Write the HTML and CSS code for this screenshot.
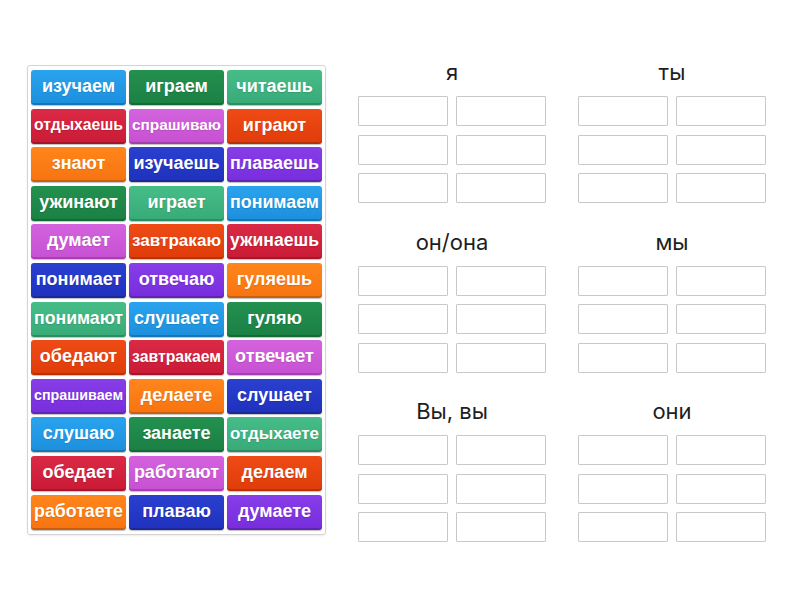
FILE: index.html
```html
<!DOCTYPE html>
<html lang="ru">
<head>
<meta charset="utf-8">
<title>Группировка</title>
<link rel="stylesheet" href="styles.css">
</head>
<body>
<div class="page">
  <div class="bank">
    <div class="tile blue"><span>изучаем</span></div>
    <div class="tile dkgreen"><span>играем</span></div>
    <div class="tile teal"><span>читаешь</span></div>
    <div class="tile red"><span>отдыхаешь</span></div>
    <div class="tile pink"><span>спрашиваю</span></div>
    <div class="tile orred"><span>играют</span></div>
    <div class="tile orange"><span>знают</span></div>
    <div class="tile dkblue"><span>изучаешь</span></div>
    <div class="tile violet"><span>плаваешь</span></div>
    <div class="tile dkgreen"><span>ужинают</span></div>
    <div class="tile teal"><span>играет</span></div>
    <div class="tile blue"><span>понимаем</span></div>
    <div class="tile pink"><span>думает</span></div>
    <div class="tile orred"><span>завтракаю</span></div>
    <div class="tile red"><span>ужинаешь</span></div>
    <div class="tile dkblue"><span>понимает</span></div>
    <div class="tile violet"><span>отвечаю</span></div>
    <div class="tile orange"><span>гуляешь</span></div>
    <div class="tile teal"><span>понимают</span></div>
    <div class="tile blue"><span>слушаете</span></div>
    <div class="tile dkgreen"><span>гуляю</span></div>
    <div class="tile orred"><span>обедают</span></div>
    <div class="tile red"><span>завтракаем</span></div>
    <div class="tile pink"><span>отвечает</span></div>
    <div class="tile violet"><span>спрашиваем</span></div>
    <div class="tile orange"><span>делаете</span></div>
    <div class="tile dkblue"><span>слушает</span></div>
    <div class="tile blue"><span>слушаю</span></div>
    <div class="tile dkgreen"><span>занаете</span></div>
    <div class="tile teal"><span>отдыхаете</span></div>
    <div class="tile red"><span>обедает</span></div>
    <div class="tile pink"><span>работают</span></div>
    <div class="tile orred"><span>делаем</span></div>
    <div class="tile orange"><span>работаете</span></div>
    <div class="tile dkblue"><span>плаваю</span></div>
    <div class="tile violet"><span>думаете</span></div>
  </div>
  <div class="groups">
    <div class="group">
      <div class="title">я</div>
      <div class="slots"><div class="slot"></div><div class="slot"></div><div class="slot"></div><div class="slot"></div><div class="slot"></div><div class="slot"></div></div>
    </div>
    <div class="group">
      <div class="title">ты</div>
      <div class="slots"><div class="slot"></div><div class="slot"></div><div class="slot"></div><div class="slot"></div><div class="slot"></div><div class="slot"></div></div>
    </div>
    <div class="group">
      <div class="title">он/она</div>
      <div class="slots"><div class="slot"></div><div class="slot"></div><div class="slot"></div><div class="slot"></div><div class="slot"></div><div class="slot"></div></div>
    </div>
    <div class="group">
      <div class="title">мы</div>
      <div class="slots"><div class="slot"></div><div class="slot"></div><div class="slot"></div><div class="slot"></div><div class="slot"></div><div class="slot"></div></div>
    </div>
    <div class="group">
      <div class="title">Вы, вы</div>
      <div class="slots"><div class="slot"></div><div class="slot"></div><div class="slot"></div><div class="slot"></div><div class="slot"></div><div class="slot"></div></div>
    </div>
    <div class="group">
      <div class="title">они</div>
      <div class="slots"><div class="slot"></div><div class="slot"></div><div class="slot"></div><div class="slot"></div><div class="slot"></div><div class="slot"></div></div>
    </div>
  </div>
</div>
<script src="script.js"></script>
</body>
</html>
```

FILE: styles.css
```css
html, body {
  margin: 0;
  padding: 0;
  background: #ffffff;
}

.page {
  display: flex;
  align-items: flex-start;
  gap: 32px;
  padding: 60px 0 0 27px;
  font-family: Inter, Roboto, "Liberation Sans", sans-serif;
}

.bank {
  margin-top: 5px;
  width: 291px;
  padding: 4px 3px;
  border: 1px solid #d4d4d4;
  border-radius: 3px;
  box-shadow: 0 1px 2px rgba(0, 0, 0, 0.08);
  display: grid;
  grid-template-columns: repeat(3, 1fr);
  grid-auto-rows: 35px;
  column-gap: 3px;
  row-gap: 3.6px;
}

.tile {
  display: flex;
  align-items: center;
  justify-content: center;
  overflow: hidden;
  border-radius: 3px;
  color: #ffffff;
  font-family: "Liberation Sans", Arial, sans-serif;
  font-weight: bold;
  font-size: 18px;
  white-space: nowrap;
  padding-bottom: 2px;
  box-sizing: border-box;
  box-shadow: inset 0 -2px 0 rgba(0, 0, 0, 0.18), 0 1px 1px rgba(0, 0, 0, 0.25);
  text-shadow: 0 1px 1px rgba(0, 0, 0, 0.12);
}

.tile span {
  display: inline-block;
}

.blue    { background: linear-gradient(#2aa3ee, #1c8fdc); }
.dkgreen { background: linear-gradient(#23914f, #1b7f44); }
.teal    { background: linear-gradient(#46bd88, #37aa77); }
.red     { background: linear-gradient(#da2a45, #c91a36); }
.pink    { background: linear-gradient(#d463de, #c650d2); }
.orred   { background: linear-gradient(#ef4b16, #e03c0a); }
.orange  { background: linear-gradient(#ff851c, #f77410); }
.dkblue  { background: linear-gradient(#2a40cf, #1f31bd); }
.violet  { background: linear-gradient(#873ee8, #772ddc); }

.groups {
  display: grid;
  grid-template-columns: 188px 188px;
  column-gap: 32px;
  row-gap: 26.5px;
}

.title {
  height: 24px;
  line-height: 24px;
  margin-bottom: 12px;
  text-align: center;
  font-size: 22px;
  color: #1e1e1e;
}

.slots {
  display: grid;
  grid-template-columns: 90px 90px;
  grid-auto-rows: 30px;
  column-gap: 8px;
  row-gap: 8.5px;
}

.slot {
  border: 1px solid #c8c8c8;
  border-radius: 1px;
  background: #ffffff;
}
```

FILE: script.js
```js
document.querySelectorAll('.tile span').forEach(function (s) {
  var max = 89;
  var w = s.getBoundingClientRect().width;
  if (w > max) {
    s.style.fontSize = (18 * max / w).toFixed(2) + 'px';
  }
});
```
